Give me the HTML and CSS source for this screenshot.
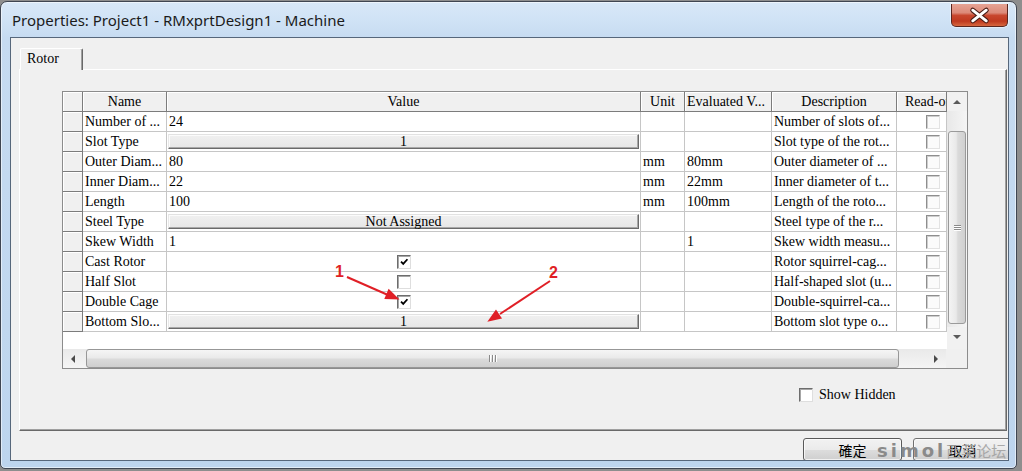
FILE: index.html
```html
<!DOCTYPE html>
<html>
<head>
<meta charset="utf-8">
<title>Properties</title>
<link rel="stylesheet" href="styles.css">
</head>
<body>
<div class="window">
  <div class="titlebar">
    <span class="title">Properties: Project1 - RMxprtDesign1 - Machine</span>
    <div class="close">
      <svg width="57" height="23" viewBox="0 0 57 23">
        <path d="M21.5 6 L35.5 17 M35.5 6 L21.5 17" stroke="#4a1d16" stroke-width="5.2" stroke-linecap="round"/>
        <path d="M21.5 6 L35.5 17 M35.5 6 L21.5 17" stroke="#ffffff" stroke-width="3" stroke-linecap="round"/>
      </svg>
    </div>
  </div>
  <div class="client">
    <div class="tabs"><div class="tab">Rotor</div></div>
    <div class="panel">
      <div class="grid">
        <div class="grid-main">
          <div class="sheet">
            <div class="row head">
              <div class="c rh"></div>
              <div class="c">Name</div>
              <div class="c">Value</div>
              <div class="c">Unit</div>
              <div class="c left">Evaluated V...</div>
              <div class="c">Description</div>
              <div class="c ro-head">Read-only</div>
            </div>
            <div class="row">
              <div class="c rh"></div><div class="c">Number of ...</div><div class="c">24</div><div class="c"></div><div class="c"></div><div class="c">Number of slots of...</div><div class="c ro"><span class="cb ro-cb"></span></div>
            </div>
            <div class="row">
              <div class="c rh"></div><div class="c">Slot Type</div><div class="c btn-cell"><div class="vbtn">1</div></div><div class="c"></div><div class="c"></div><div class="c">Slot type of the rot...</div><div class="c ro"><span class="cb ro-cb"></span></div>
            </div>
            <div class="row">
              <div class="c rh"></div><div class="c">Outer Diam...</div><div class="c">80</div><div class="c">mm</div><div class="c">80mm</div><div class="c">Outer diameter of ...</div><div class="c ro"><span class="cb ro-cb"></span></div>
            </div>
            <div class="row">
              <div class="c rh"></div><div class="c">Inner Diam...</div><div class="c">22</div><div class="c">mm</div><div class="c">22mm</div><div class="c">Inner diameter of t...</div><div class="c ro"><span class="cb ro-cb"></span></div>
            </div>
            <div class="row">
              <div class="c rh"></div><div class="c">Length</div><div class="c">100</div><div class="c">mm</div><div class="c">100mm</div><div class="c">Length of the roto...</div><div class="c ro"><span class="cb ro-cb"></span></div>
            </div>
            <div class="row">
              <div class="c rh"></div><div class="c">Steel Type</div><div class="c btn-cell"><div class="vbtn">Not Assigned</div></div><div class="c"></div><div class="c"></div><div class="c">Steel type of the r...</div><div class="c ro"><span class="cb ro-cb"></span></div>
            </div>
            <div class="row">
              <div class="c rh"></div><div class="c">Skew Width</div><div class="c">1</div><div class="c"></div><div class="c">1</div><div class="c">Skew width measu...</div><div class="c ro"><span class="cb ro-cb"></span></div>
            </div>
            <div class="row">
              <div class="c rh"></div><div class="c">Cast Rotor</div><div class="c cb-cell"><span class="cb"><svg width="12" height="12" viewBox="0 0 12 12"><path d="M2.2 5.6 L4.6 8 L9.2 3" fill="none" stroke="#000" stroke-width="2"/></svg></span></div><div class="c"></div><div class="c"></div><div class="c">Rotor squirrel-cag...</div><div class="c ro"><span class="cb ro-cb"></span></div>
            </div>
            <div class="row">
              <div class="c rh"></div><div class="c">Half Slot</div><div class="c cb-cell"><span class="cb"></span></div><div class="c"></div><div class="c"></div><div class="c">Half-shaped slot (u...</div><div class="c ro"><span class="cb ro-cb"></span></div>
            </div>
            <div class="row">
              <div class="c rh"></div><div class="c">Double Cage</div><div class="c cb-cell"><span class="cb"><svg width="12" height="12" viewBox="0 0 12 12"><path d="M2.2 5.6 L4.6 8 L9.2 3" fill="none" stroke="#000" stroke-width="2"/></svg></span></div><div class="c"></div><div class="c"></div><div class="c">Double-squirrel-ca...</div><div class="c ro"><span class="cb ro-cb"></span></div>
            </div>
            <div class="row">
              <div class="c rh"></div><div class="c">Bottom Slo...</div><div class="c btn-cell"><div class="vbtn">1</div></div><div class="c"></div><div class="c"></div><div class="c">Bottom slot type o...</div><div class="c ro"><span class="cb ro-cb"></span></div>
            </div>
            <div class="filler"></div>
          </div>
          <div class="vscroll">
            <div class="sb-btn"><span class="tri-up"></span></div>
            <div class="vtrack"><div class="vthumb"><span class="hgrip"></span><span class="hgrip"></span><span class="hgrip"></span></div></div>
            <div class="sb-btn"><span class="tri-down"></span></div>
          </div>
        </div>
        <div class="hbar">
          <div class="hscroll">
            <div class="hs-btn"><span class="tri-left"></span></div>
            <div class="hthumb"><span class="vgrip"></span><span class="vgrip"></span><span class="vgrip"></span></div>
            <div class="hs-space"></div>
            <div class="hs-btn hs-right"><span class="tri-right"></span></div>
          </div>
          <div class="corner"></div>
        </div>
      </div>
      <div class="show"><span class="cb"></span><span class="show-label">Show Hidden</span></div>
    </div>
    <div class="buttons">
      <button class="btn default">確定</button>
      <button class="btn">取消</button>
    </div>
  </div>
</div>

<svg class="annotations" width="1022" height="471" viewBox="0 0 1022 471">
  <text x="335" y="277" class="ann-num">1</text>
  <line x1="347" y1="277" x2="388" y2="295" stroke="#e01f26" stroke-width="2"/>
  <polygon points="399.5,299.5 384.3,298.9 388.6,288.7" fill="#e01f26"/>
  <text x="549" y="278" class="ann-num">2</text>
  <line x1="550" y1="281" x2="500" y2="314" stroke="#e01f26" stroke-width="2"/>
  <polygon points="487.3,321.7 496,309.4 502,318.6" fill="#e01f26"/>
</svg>

<div class="watermark"><span class="wm-logo">simol</span><span class="wm-cn">西莫论坛</span></div>
</body>
</html>
```

FILE: styles.css
```css
* { box-sizing: border-box; }
html, body { margin: 0; padding: 0; }
body {
  width: 1022px;
  height: 471px;
  overflow: hidden;
  position: relative;
  background: #8e8e8e;
  font-family: "Liberation Serif", "Times New Roman", serif;
  font-size: 14px;
  color: #000;
}

.window {
  width: 1017px;
  height: 468px;
  margin-top: 1px;
  border: 1px solid #3f4652;
  border-radius: 7px 7px 5px 5px;
  background: linear-gradient(180deg, #d8e8f8 0, #cfe2f5 20px, #c6dbf1 36px, #bdd5ee 100%);
  box-shadow: inset 0 0 0 1px rgba(255, 255, 255, 0.55);
  padding: 0 7px 7px 9px;
  display: flex;
  flex-direction: column;
}

.titlebar {
  height: 35px;
  display: flex;
  align-items: flex-start;
  justify-content: space-between;
  padding-left: 2px;
}
.title {
  font-family: "Noto Sans", "Open Sans", sans-serif;
  font-size: 15px;
  color: #1b1b1b;
  padding-top: 8px;
  line-height: 20px;
}
.close {
  width: 57px;
  height: 23px;
  margin-top: 2px;
  margin-right: 1px;
  border: 1px solid #5a261f;
  border-top: none;
  border-radius: 0 0 5px 5px;
  background: linear-gradient(180deg, #e6a394 0%, #dc8a79 40%, #c8472e 52%, #bf3a20 78%, #d6673f 100%);
  box-shadow: 0 0 0 1px rgba(255, 255, 255, 0.45);
  display: flex;
}
.close svg { display: block; }

.client {
  height: 424px;
  border: 1px solid #56677b;
  background: #f0f0f0;
  overflow: hidden;
  position: relative;
}

.tabs {
  height: 31px;
  padding: 10px 0 0 9px;
  display: flex;
  align-items: flex-start;
}
.tab {
  width: 63px;
  height: 22px;
  margin-bottom: -1px;
  position: relative;
  z-index: 1;
  background: #f0f0f0;
  border: 1px solid #fff;
  border-right-color: #696969;
  border-bottom: none;
  border-radius: 2px 2px 0 0;
  box-shadow: inset -1px 0 0 #a0a0a0;
  padding: 2px 0 0 6px;
  line-height: 16px;
}

.panel {
  margin-left: 8px;
  width: 988px;
  height: 362px;
  border: 1px solid;
  border-color: #fff #696969 #696969 #fff;
  box-shadow: inset -1px -1px 0 #a0a0a0;
  padding: 21px 0 0 42px;
}

.grid {
  width: 906px;
  height: 278px;
  border: 1px solid #8c8c8c;
  background: #fff;
  display: flex;
  flex-direction: column;
}
.grid-main {
  display: flex;
  height: 257px;
}
.sheet {
  width: 884px;
  display: flex;
  flex-direction: column;
  background: #fff;
}
.row {
  display: grid;
  grid-template-columns: 20px 84px 474px 44px 87px 125px 50px;
  height: 20px;
  flex: none;
}
.c {
  border-right: 1px solid #c6c6c6;
  border-bottom: 1px solid #c6c6c6;
  padding: 0 2px;
  line-height: 19px;
  white-space: nowrap;
  overflow: hidden;
}
.c.rh {
  background: #f0f0f0;
  border-right-color: #7c7c7c;
  border-bottom-color: #7c7c7c;
  box-shadow: inset 1px 1px 0 #fff;
}
.head .c {
  background: #f0f0f0;
  border-right-color: #7c7c7c;
  border-bottom-color: #7c7c7c;
  box-shadow: inset 1px 1px 0 #fff;
  text-align: center;
}
.head .c.left { text-align: left; }
.head .c.ro-head { text-align: left; padding-left: 8px; overflow: hidden; }

.btn-cell { padding: 0; }
.vbtn {
  margin: 2px 1px 0 1px;
  height: 15px;
  border: 1px solid;
  border-color: #e2e2e2 #6a6a6a #6a6a6a #e8e8e8;
  box-shadow: inset -1px -1px 0 #a8a8a8, inset 1px 1px 0 #fbfbfb;
  background: linear-gradient(180deg, #f0f0f0, #e6e6e6);
  text-align: center;
  line-height: 13px;
}

.cb-cell {
  display: flex;
  align-items: center;
  justify-content: center;
  padding: 0;
}
.ro {
  display: flex;
  align-items: center;
  padding: 0 0 0 29px;
}
.cb {
  width: 14px;
  height: 14px;
  flex: none;
  display: flex;
  align-items: center;
  justify-content: center;
  border: 1px solid;
  border-color: #6d6d6d #dedede #dedede #6d6d6d;
  box-shadow: inset 1px 1px 0 #a6a6a6;
  background: #fff;
}
.cb svg { display: block; margin: 1px 0 0 1px; }
.cb.ro-cb {
  border-color: #8e8e8e #e3e3e3 #e3e3e3 #8e8e8e;
  box-shadow: inset 1px 1px 0 #cdcdcd;
  background: #fbfbfb;
}
.filler { flex: 1; background: #fff; }

.vscroll {
  width: 20px;
  background: #f1f1f1;
  display: flex;
  flex-direction: column;
  padding-bottom: 3px;
}
.sb-btn {
  height: 19px;
  flex: none;
  display: flex;
  align-items: center;
  justify-content: center;
}
.tri-up, .tri-down, .tri-left, .tri-right { width: 0; height: 0; display: block; }
.tri-up { border-left: 4px solid transparent; border-right: 4px solid transparent; border-bottom: 4px solid #5a5a5a; }
.tri-down { border-left: 4px solid transparent; border-right: 4px solid transparent; border-top: 4px solid #5a5a5a; }
.tri-left { border-top: 4px solid transparent; border-bottom: 4px solid transparent; border-right: 4px solid #4a4a4a; }
.tri-right { border-top: 4px solid transparent; border-bottom: 4px solid transparent; border-left: 4px solid #4a4a4a; }
.vtrack {
  flex: 1;
  padding: 20px 1px 0 1px;
  background: linear-gradient(90deg, #e8e8e8, #f5f5f5);
}
.vthumb {
  height: 193px;
  border: 1px solid #9a9a9a;
  border-radius: 3px;
  background: linear-gradient(90deg, #f4f4f4 0%, #e9e9e9 45%, #dadada 55%, #d0d0d0 100%);
  display: flex;
  flex-direction: column;
  align-items: center;
  justify-content: center;
  gap: 1px;
}
.hgrip { width: 7px; height: 1px; background: #8a8a8a; box-shadow: 0 1px 0 #fff; }

.hbar {
  display: flex;
  height: 19px;
}
.hscroll {
  width: 883px;
  display: flex;
  background: linear-gradient(180deg, #e9e9e9, #f5f5f5);
}
.hs-btn {
  width: 19px;
  flex: none;
  display: flex;
  align-items: center;
  justify-content: center;
}
.hs-right { width: 20px; }
.hthumb {
  width: 813px;
  margin-left: 4px;
  flex: none;
  border: 1px solid #979797;
  border-radius: 3px;
  background: linear-gradient(180deg, #f5f5f5 0%, #eaeaea 45%, #dadada 55%, #cfcfcf 100%);
  display: flex;
  align-items: center;
  justify-content: center;
  gap: 2px;
}
.vgrip { width: 1px; height: 7px; background: #8a8a8a; box-shadow: 1px 0 0 #fff; }
.hs-space { flex: 1; }
.corner { flex: 1; background: #f0f0f0; }

.show {
  display: flex;
  align-items: center;
  height: 16px;
  margin-top: 18px;
  padding-left: 737px;
  gap: 6px;
  line-height: 16px;
}

.buttons {
  display: flex;
  gap: 11px;
  padding-left: 792px;
  margin-top: 7px;
}
.btn {
  width: 99px;
  height: 23px;
  flex: none;
  padding: 0;
  border: 1px solid #707070;
  border-radius: 3px;
  background: linear-gradient(180deg, #f2f2f2 0%, #ebebeb 50%, #dddddd 51%, #cfcfcf 100%);
  box-shadow: inset 0 0 0 1px rgba(255, 255, 255, 0.7);
  font-family: "Noto Sans CJK TC", "Noto Sans CJK SC", sans-serif;
  font-size: 14px;
  line-height: 20px;
  color: #000;
}
.btn.default { border-color: #5a5a5a; }

.annotations {
  position: absolute;
  left: 0;
  top: 0;
  pointer-events: none;
}
.ann-num {
  font-family: "Liberation Sans", Arial, sans-serif;
  font-weight: bold;
  font-size: 16px;
  fill: #e01f26;
}

.watermark {
  position: absolute;
  left: 877px;
  top: 440px;
  display: flex;
  align-items: flex-end;
  pointer-events: none;
}
.wm-logo {
  font-family: "DejaVu Sans", sans-serif;
  font-weight: bold;
  font-size: 18px;
  letter-spacing: 3px;
  color: #8a8a8a;
  line-height: 22px;
}
.wm-cn {
  font-family: "Noto Sans CJK SC", sans-serif;
  font-size: 15px;
  color: #a2a2a2;
  line-height: 22px;
  opacity: 0.9;
}
```
